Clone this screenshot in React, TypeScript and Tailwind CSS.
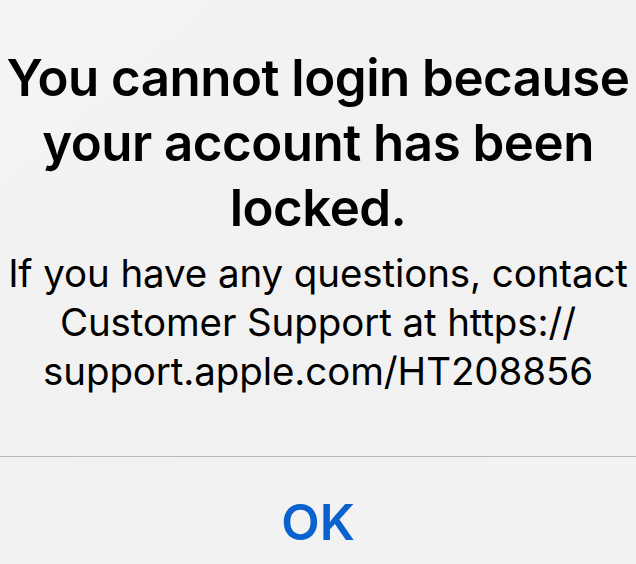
import React from "react";

export default function App() {
  return (
    <div
      className="w-[636px] h-[564px] overflow-hidden flex flex-col bg-gradient-to-br from-[#f4f4f4] via-[#f1f1f1] to-[#f3f3f3]"
      style={{ fontFamily: 'Inter, "Liberation Sans", Arial, sans-serif' }}
    >
      <div className="flex flex-col items-center pt-[45px]">
        <h1 className="text-[51px] leading-[65px] font-semibold text-black text-center whitespace-nowrap tracking-[-0.5px]">
          You cannot login because
          <br />
          your account has been
          <br />
          locked.
        </h1>
        <p className="mt-[9px] text-[38.5px] leading-[49px] text-black text-center whitespace-nowrap tracking-[-0.1px]">
          If you have any questions, contact
          <br />
          Customer Support at https://
          <br />
          support.apple.com/HT208856
        </p>
      </div>
      <div className="mt-[60px] h-px bg-[#b9b9b9]" />
      <div className="flex-1 flex items-center justify-center pt-[22px]">
        <span className="text-[50px] font-semibold text-[#0a62cf] leading-none">OK</span>
      </div>
    </div>
  );
}
